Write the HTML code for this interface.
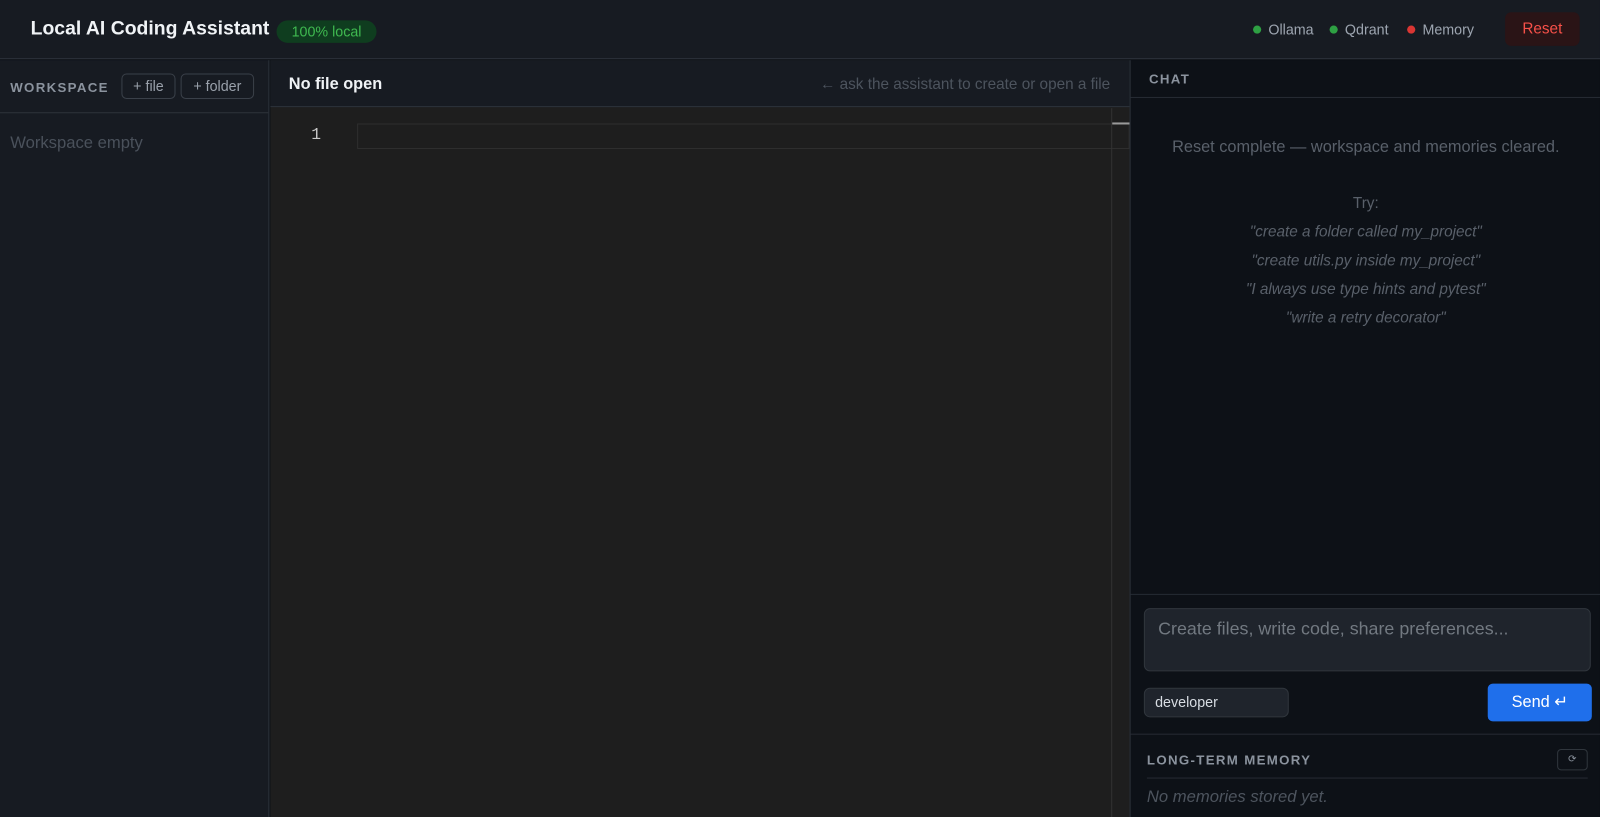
<!DOCTYPE html>
<html><head><meta charset="utf-8"><style>
*{box-sizing:border-box;margin:0;padding:0}
html,body{width:1600px;height:817px;overflow:hidden;background:#0d1117}
body{font-family:"Liberation Sans",sans-serif;position:relative}
#w{position:absolute;left:0;top:0;width:1568px;height:801px;transform:scale(1.0204);transform-origin:0 0}
.hdr{position:absolute;left:0;top:0;width:1568px;height:58px;background:#171b22;border-bottom:1px solid #2d333b}
.title{position:absolute;left:30px;top:18px;font-size:19px;font-weight:bold;color:#f0f3f6}
.badge{position:absolute;left:271px;top:20px;width:98px;height:22px;border-radius:11px;background:#0f3d1f;color:#3fb950;font-size:14px;text-align:center;line-height:22px}
.st{position:absolute;top:21px;font-size:14px;color:#9da5b0}
.dot{display:inline-block;width:8px;height:8px;border-radius:4px;margin-right:7px;vertical-align:1px}
.reset{position:absolute;left:1475px;top:12px;width:73px;height:33px;border-radius:6px;background:#2a1416;color:#f85149;font-size:15px;text-align:center;line-height:33px}
.side{position:absolute;left:0;top:59px;width:264px;height:742px;background:#171b22;border-right:1px solid #2d333b}
.sh{height:52px;border-bottom:1px solid #2d333b;position:relative}
.lab{position:absolute;font-size:13px;font-weight:bold;letter-spacing:1.3px;color:#8b939e}
.btn{position:absolute;top:13px;height:25px;border:1px solid #3a4049;border-radius:5px;color:#9aa1ab;font-size:14px;line-height:23px;text-align:center}
.ed{position:absolute;left:265px;top:59px;width:842px;height:742px;background:#1e1e1e}
.eh{height:46px;background:#171b22;border-bottom:1px solid #2d333b;position:relative}
.chat{position:absolute;left:1107px;top:59px;width:461px;height:742px;background:#0d1117;border-left:1px solid #2d333b}
.it{font-style:italic}
</style></head><body><div id="w">
<div class="hdr">
<div class="title">Local AI Coding Assistant</div>
<div class="badge">100% local</div>
<div class="st" style="left:1228px"><span class="dot" style="background:#2ea043"></span>Ollama</div>
<div class="st" style="left:1303px"><span class="dot" style="background:#2ea043"></span>Qdrant</div>
<div class="st" style="left:1379px"><span class="dot" style="background:#da3633"></span>Memory</div>
<div class="reset">Reset</div>
</div>
<div class="side">
<div class="sh"><div class="lab" style="left:10px;top:19px">WORKSPACE</div>
<div class="btn" style="left:119px;width:53px">+ file</div>
<div class="btn" style="left:177px;width:72px">+ folder</div></div>
<div style="position:absolute;left:10px;top:72px;font-size:16.3px;color:#4a515b">Workspace empty</div>
</div>
<div class="ed">
<div class="eh"><div style="position:absolute;left:18px;top:15px;font-size:16px;font-weight:bold;color:#f0f3f6">No file open</div>
<div style="position:absolute;right:19px;top:15px;font-size:15px;color:#4d545e">← ask the assistant to create or open a file</div></div>
<div style="position:absolute;left:40px;top:64px;font-family:'Liberation Mono',monospace;font-size:16px;color:#c6c6c6">1</div>
<div style="position:absolute;left:85px;top:62px;width:757px;height:25px;border:1px solid #2e2e2e"></div>
<div style="position:absolute;left:824px;top:47px;width:1px;height:695px;background:#333"></div>
<div style="position:absolute;left:825px;top:61px;width:17px;height:2px;background:#9a9a9a"></div>
</div>
<div class="chat">
<div style="height:37px;border-bottom:1px solid #262b33;position:relative"><div class="lab" style="left:18px;top:11px">CHAT</div></div>
<div style="position:absolute;left:0;width:461px;top:72px;text-align:center;font-size:16px;color:#59606a;line-height:28px">Reset complete — workspace and memories cleared.</div>
<div style="position:absolute;left:0;width:461px;top:127px;text-align:center;font-size:15px;color:#59606a;line-height:28px">Try:<br><span class="it">"create a folder called my_project"<br>"create utils.py inside my_project"<br>"I always use type hints and pytest"<br>"write a retry decorator"</span></div>
<div style="position:absolute;left:0;top:523px;width:461px;height:1px;background:#262b33"></div>
<div style="position:absolute;left:13px;top:537px;width:438px;height:62px;background:#1f242c;border:1px solid #30363d;border-radius:6px;padding:9px 13px;font-size:17.5px;color:#727981">Create files, write code, share preferences...</div>
<div style="position:absolute;left:13px;top:615px;width:142px;height:29px;background:#1f242c;border:1px solid #30363d;border-radius:6px;padding:0 10px;line-height:27px;font-size:14px;color:#d8dde3">developer</div>
<div style="position:absolute;left:350px;top:611px;width:102px;height:37px;background:#1f6feb;border-radius:5px;color:#fff;font-size:16px;text-align:center;line-height:37px">Send ↵</div>
<div style="position:absolute;left:0;top:660px;width:461px;height:1px;background:#262b33"></div>
<div class="lab" style="left:16px;top:678px">LONG-TERM MEMORY</div>
<div style="position:absolute;left:418px;top:675px;width:30px;height:21px;border:1px solid #30363d;border-radius:4px;color:#8b939e;font-size:10px;text-align:center;line-height:19px">⟳</div>
<div style="position:absolute;left:16px;top:703px;width:432px;height:1px;background:#262b33"></div>
<div class="it" style="position:absolute;left:16px;top:713px;font-size:16.3px;color:#4d545e">No memories stored yet.</div>
</div>
</div></body></html>
